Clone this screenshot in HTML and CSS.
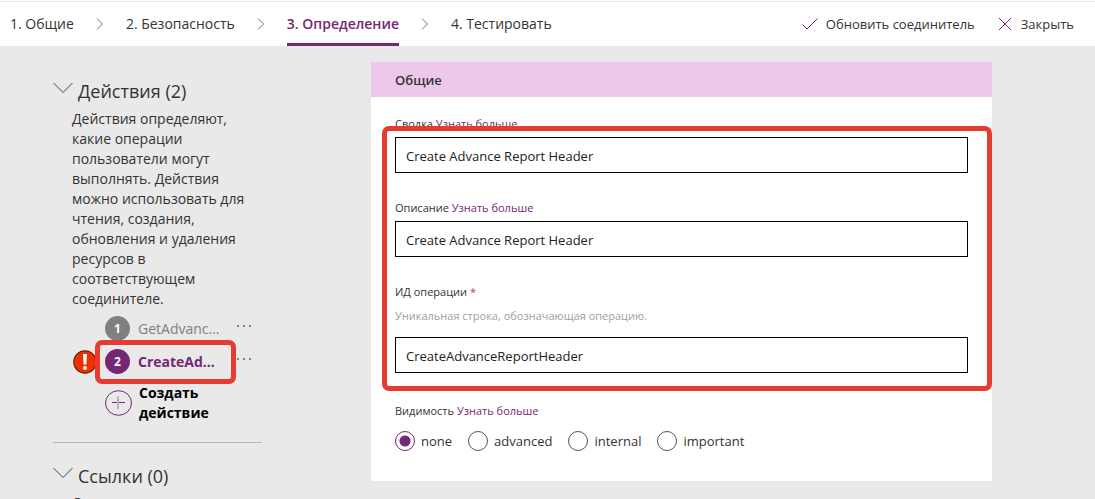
FILE: index.html
```html
<!DOCTYPE html>
<html lang="ru">
<head>
<meta charset="utf-8">
<title>Определение соединителя</title>
<link rel="stylesheet" href="styles.css">
</head>
<body>
<header class="topbar">
  <nav class="steps">
    <a class="step" href="#general">1. Общие</a>
    <svg class="sep" viewBox="0 0 8 12"><path d="M1 0.5 L6.5 6 L1 11.5"/></svg>
    <a class="step" href="#security">2. Безопасность</a>
    <svg class="sep" viewBox="0 0 8 12"><path d="M1 0.5 L6.5 6 L1 11.5"/></svg>
    <a class="step step-active" href="#definition" aria-current="step">3. Определение</a>
    <svg class="sep" viewBox="0 0 8 12"><path d="M1 0.5 L6.5 6 L1 11.5"/></svg>
    <a class="step" href="#test">4. Тестировать</a>
  </nav>
  <div class="commands">
    <button class="command" type="button">
      <svg class="cmd-icon" viewBox="0 0 16 14"><path d="M0.5 7.5 L5 12 L15.5 1.5"/></svg>
      <span>Обновить соединитель</span>
    </button>
    <button class="command" type="button">
      <svg class="cmd-icon" viewBox="0 0 16 14"><path d="M2 1 L14 13 M14 1 L2 13"/></svg>
      <span>Закрыть</span>
    </button>
  </div>
</header>
<div class="page">
  <aside class="sidebar">
    <section class="group">
      <button class="group-title" type="button" aria-expanded="true">
        <svg class="chevron" viewBox="0 0 20 12"><path d="M0.5 1 L10 10.5 L19.5 1"/></svg>
        <span>Действия (2)</span>
      </button>
      <p class="group-text">Действия определяют, какие операции пользователи могут выполнять. Действия можно использовать для чтения, создания, обновления и удаления ресурсов в соответствующем соединителе.</p>
      <ul class="actions">
        <li class="action">
          <button class="action-main" type="button"><span class="badge">1</span><span class="action-name">GetAdvanc...</span></button>
          <button class="more" type="button" aria-label="Дополнительно"><i></i><i></i><i></i></button>
        </li>
        <li class="action action-selected">
          <svg class="warning" viewBox="0 0 24 24"><circle cx="12" cy="12" r="11.2" fill="#eb3300" stroke="#7c1c00" stroke-width="1.2"/><path d="M10 4h4l-.6 10.5h-2.8z" fill="#fff"/><circle cx="12" cy="18" r="2" fill="#fff"/></svg>
          <button class="action-main" type="button"><span class="badge">2</span><span class="action-name">CreateAd...</span></button>
          <button class="more" type="button" aria-label="Дополнительно"><i></i><i></i><i></i></button>
          <span class="mark mark-action"></span>
        </li>
      </ul>
      <button class="new-action" type="button">
        <svg class="plus" viewBox="0 0 27 26"><ellipse cx="13.5" cy="13" rx="13" ry="12.3" stroke="#742774"/><path d="M7 12.5 H20" stroke="#742774"/><path d="M13 6.5 V19" stroke="#c9a5c9" stroke-width="2"/></svg>
        <span>Создать действие</span>
      </button>
    </section>
    <section class="group">
      <button class="group-title" type="button" aria-expanded="true">
        <svg class="chevron" viewBox="0 0 20 12"><path d="M0.5 1 L10 10.5 L19.5 1"/></svg>
        <span>Ссылки (0)</span>
      </button>
      <p class="group-text">Ссылки</p>
    </section>
  </aside>
  <main class="content">
    <form class="card">
      <h2 class="card-title">Общие</h2>
      <div class="card-body">
        <div class="fields">
          <div class="field">
            <div class="caption"><label for="summary">Сводка</label> <a href="#more">Узнать больше</a></div>
            <input class="text" id="summary" type="text" value="Create Advance Report Header">
          </div>
          <div class="field">
            <div class="caption"><label for="description">Описание</label> <a href="#more">Узнать больше</a></div>
            <input class="text" id="description" type="text" value="Create Advance Report Header">
          </div>
          <div class="field">
            <div class="caption"><label for="operation">ИД операции <span class="required">*</span></label></div>
            <p class="hint">Уникальная строка, обозначающая операцию.</p>
            <input class="text" id="operation" type="text" value="CreateAdvanceReportHeader">
          </div>
          <span class="mark mark-fields"></span>
        </div>
        <div class="visibility">
          <div class="caption"><span>Видимость</span> <a href="#more">Узнать больше</a></div>
          <div class="options" role="radiogroup" aria-label="Видимость">
            <label class="option"><input type="radio" name="visibility" checked>none</label>
            <label class="option"><input type="radio" name="visibility">advanced</label>
            <label class="option"><input type="radio" name="visibility">internal</label>
            <label class="option"><input type="radio" name="visibility">important</label>
          </div>
        </div>
      </div>
    </form>
  </main>
</div>
</body>
</html>
```
FILE: styles.css
```css
* { box-sizing: border-box; }

body {
  margin: 0;
  height: 100vh;
  overflow: hidden;
  display: flex;
  flex-direction: column;
  background: #e9e9e9;
  color: #333;
  font: 13px/20px "Open Sans", "Noto Sans", sans-serif;
}

button {
  padding: 0;
  border: 0;
  background: none;
  color: inherit;
  font: inherit;
  text-align: left;
}

a { color: #742774; text-decoration: none; }
svg { flex: none; fill: none; }

.topbar {
  flex: none;
  display: flex;
  justify-content: space-between;
  height: 45px;
  margin-top: 1px;
  padding: 0 21px 0 10px;
  border-top: 1px solid #e6e6e6;
  background: #fff;
  box-shadow: 0 -1px #fff;
}
.steps { display: flex; gap: 22px; align-items: center; }
.step {
  height: 100%;
  padding-top: 12px;
  border-bottom: 3px solid transparent;
  color: #333;
  font-size: 14px;
}
.step-active {
  border-color: #742774;
  color: #742774;
  font-weight: 600;
}
.sep { width: 8px; height: 12px; stroke: #777; }
.commands { display: flex; gap: 22px; align-items: center; }
.command { display: flex; gap: 8px; align-items: center; }
.cmd-icon { width: 16px; height: 14px; stroke: #742774; }

.page { flex: 1; display: flex; min-height: 0; }
.sidebar { flex: none; width: 371px; padding: 32px 109px 0 53px; }

.group + .group { border-top: 1px solid #b8b8b8; margin-top: 19px; padding-top: 20px; }
.group-title {
  display: flex;
  gap: 5px;
  height: 26px;
  font-size: 18px;
  line-height: 26px;
}
.chevron { width: 20px; height: 12px; margin-top: 4px; stroke: #444; }
.group-text { margin: 5px 0 0; padding: 0 12px 0 19px; font-size: 14px; }
.group + .group .group-text { margin-top: 4px; }

.actions { margin: 7px 0 0; padding: 0 0 0 52px; list-style: none; }
.action {
  position: relative;
  display: flex;
  justify-content: space-between;
  height: 25px;
  padding-right: 11px;
  color: #808080;
}
.action + .action { margin-top: 8px; }
.action-selected { color: #742774; font-weight: 700; }
.action-main { display: flex; gap: 8px; align-items: center; font-size: 14px; }
.badge {
  width: 25px;
  height: 25px;
  border-radius: 50%;
  background: #808080;
  color: #fff;
  font-size: 12px;
  font-weight: 700;
  line-height: 25px;
  text-align: center;
}
.action-selected .badge { background: #742774; }
.more { display: flex; gap: 4px; align-self: flex-start; padding-top: 9px; }
.more i { width: 2px; height: 2px; background: #a46ea4; }
.warning { position: absolute; left: -32px; top: 1px; width: 24px; height: 24px; }

.mark { position: absolute; border: 5px solid #e53b30; border-radius: 7px; pointer-events: none; }
.mark-action { inset: -9px 26px -10px -10px; }

.new-action {
  display: flex;
  gap: 7px;
  align-items: center;
  margin: 9px 0 0 52px;
  color: #000;
  font-size: 14px;
  font-weight: 700;
}
.new-action span { width: 80px; }
.plus { width: 27px; height: 26px; }

.content { flex: 1; padding: 16px 103px 0 0; }
.card { background: #fff; }
.card-title {
  margin: 0;
  padding: 1px 24px 0;
  background: #edc8eb;
  font-size: 13px;
  font-weight: 600;
  line-height: 34px;
}
.card-body { padding: 18px 24px 30px; }
.fields { position: relative; display: grid; gap: 26px; }
.mark-fields { inset: 11px -24px -18px -13px; }
.caption { margin-bottom: 4px; font-size: 11px; line-height: 18px; }
.required { color: #d13438; }
.hint { margin: 6px 0 12px; color: #a0a0a0; font-size: 11px; line-height: 18px; }
.caption:has(+ .hint) { margin-bottom: 0; }
.text {
  display: block;
  width: 100%;
  height: 36px;
  padding: 1px 10px 0;
  border: 1px solid #000;
  border-radius: 0;
  background: #fff;
  color: #222;
  font: inherit;
}

.visibility { margin-top: 29px; }
.options { display: flex; gap: 16px; margin-top: 11px; }
.option { display: flex; gap: 6px; align-items: center; }
.option input {
  appearance: none;
  width: 20px;
  height: 20px;
  margin: 0;
  border: 1px solid #555;
  border-radius: 50%;
}
.option input:checked {
  border-color: #742774;
  background: radial-gradient(circle, #742774 5px, transparent 6px);
}
```
